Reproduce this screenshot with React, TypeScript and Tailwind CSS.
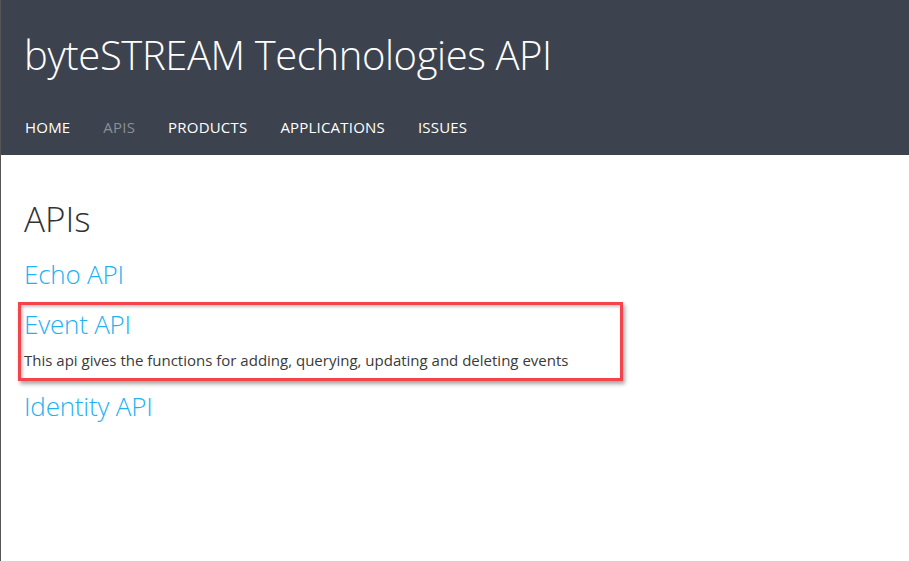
const navItems = [
  { label: 'HOME', active: false },
  { label: 'APIS', active: true },
  { label: 'PRODUCTS', active: false },
  { label: 'APPLICATIONS', active: false },
  { label: 'ISSUES', active: false },
]

const apis = [
  { name: 'Echo API', gap: 'mt-[16px]' },
  { name: 'Event API', description: 'This api gives the functions for adding, querying, updating and deleting events', highlight: true, gap: 'mt-[16px]' },
  { name: 'Identity API', gap: 'mt-[19px]' },
]

export default function App() {
  return (
    <div className="min-h-[561px] bg-white border-l border-[#555] font-['Open_Sans',sans-serif]">
      {/* Header */}
      <header className="bg-[#3d434e] h-[155px] px-[23px] pt-[31px]">
        <h1 className="text-white text-[40px] font-light leading-[48px] tracking-[-0.4px] whitespace-nowrap">byteSTREAM Technologies API</h1>
        <nav className="flex gap-[33px] mt-[38px] pl-px">
          {navItems.map((item) => (
            <a
              key={item.label}
              className={`text-[15px] leading-5 tracking-[0.2px] ${item.active ? 'text-[#8a8f96]' : 'text-white'}`}
            >
              {item.label}
            </a>
          ))}
        </nav>
      </header>

      <main className="px-[23px] pt-[42px]">
        <h2 className="text-[35px] font-light text-[#333] leading-[44px]">APIs</h2>
        {apis.map((api) => (
          <div key={api.name} className={`relative ${api.gap}`}>
            {api.highlight && (
              <div className="absolute -left-[6px] -top-[5px] w-[605px] h-[79px] border-[3px] border-[#f2444a] shadow-[2px_3px_4px_rgba(0,0,0,0.35),inset_2px_2px_3px_rgba(0,0,0,0.22)] pointer-events-none" />
            )}
            <a className="block text-[26px] font-light text-[#1eb1f3] leading-[34px] tracking-[-0.2px]">{api.name}</a>
            {api.description && (
              <p className="text-[15px] text-[#3a3a3a] leading-5 mt-[9px]">{api.description}</p>
            )}
          </div>
        ))}
      </main>
    </div>
  )
}
